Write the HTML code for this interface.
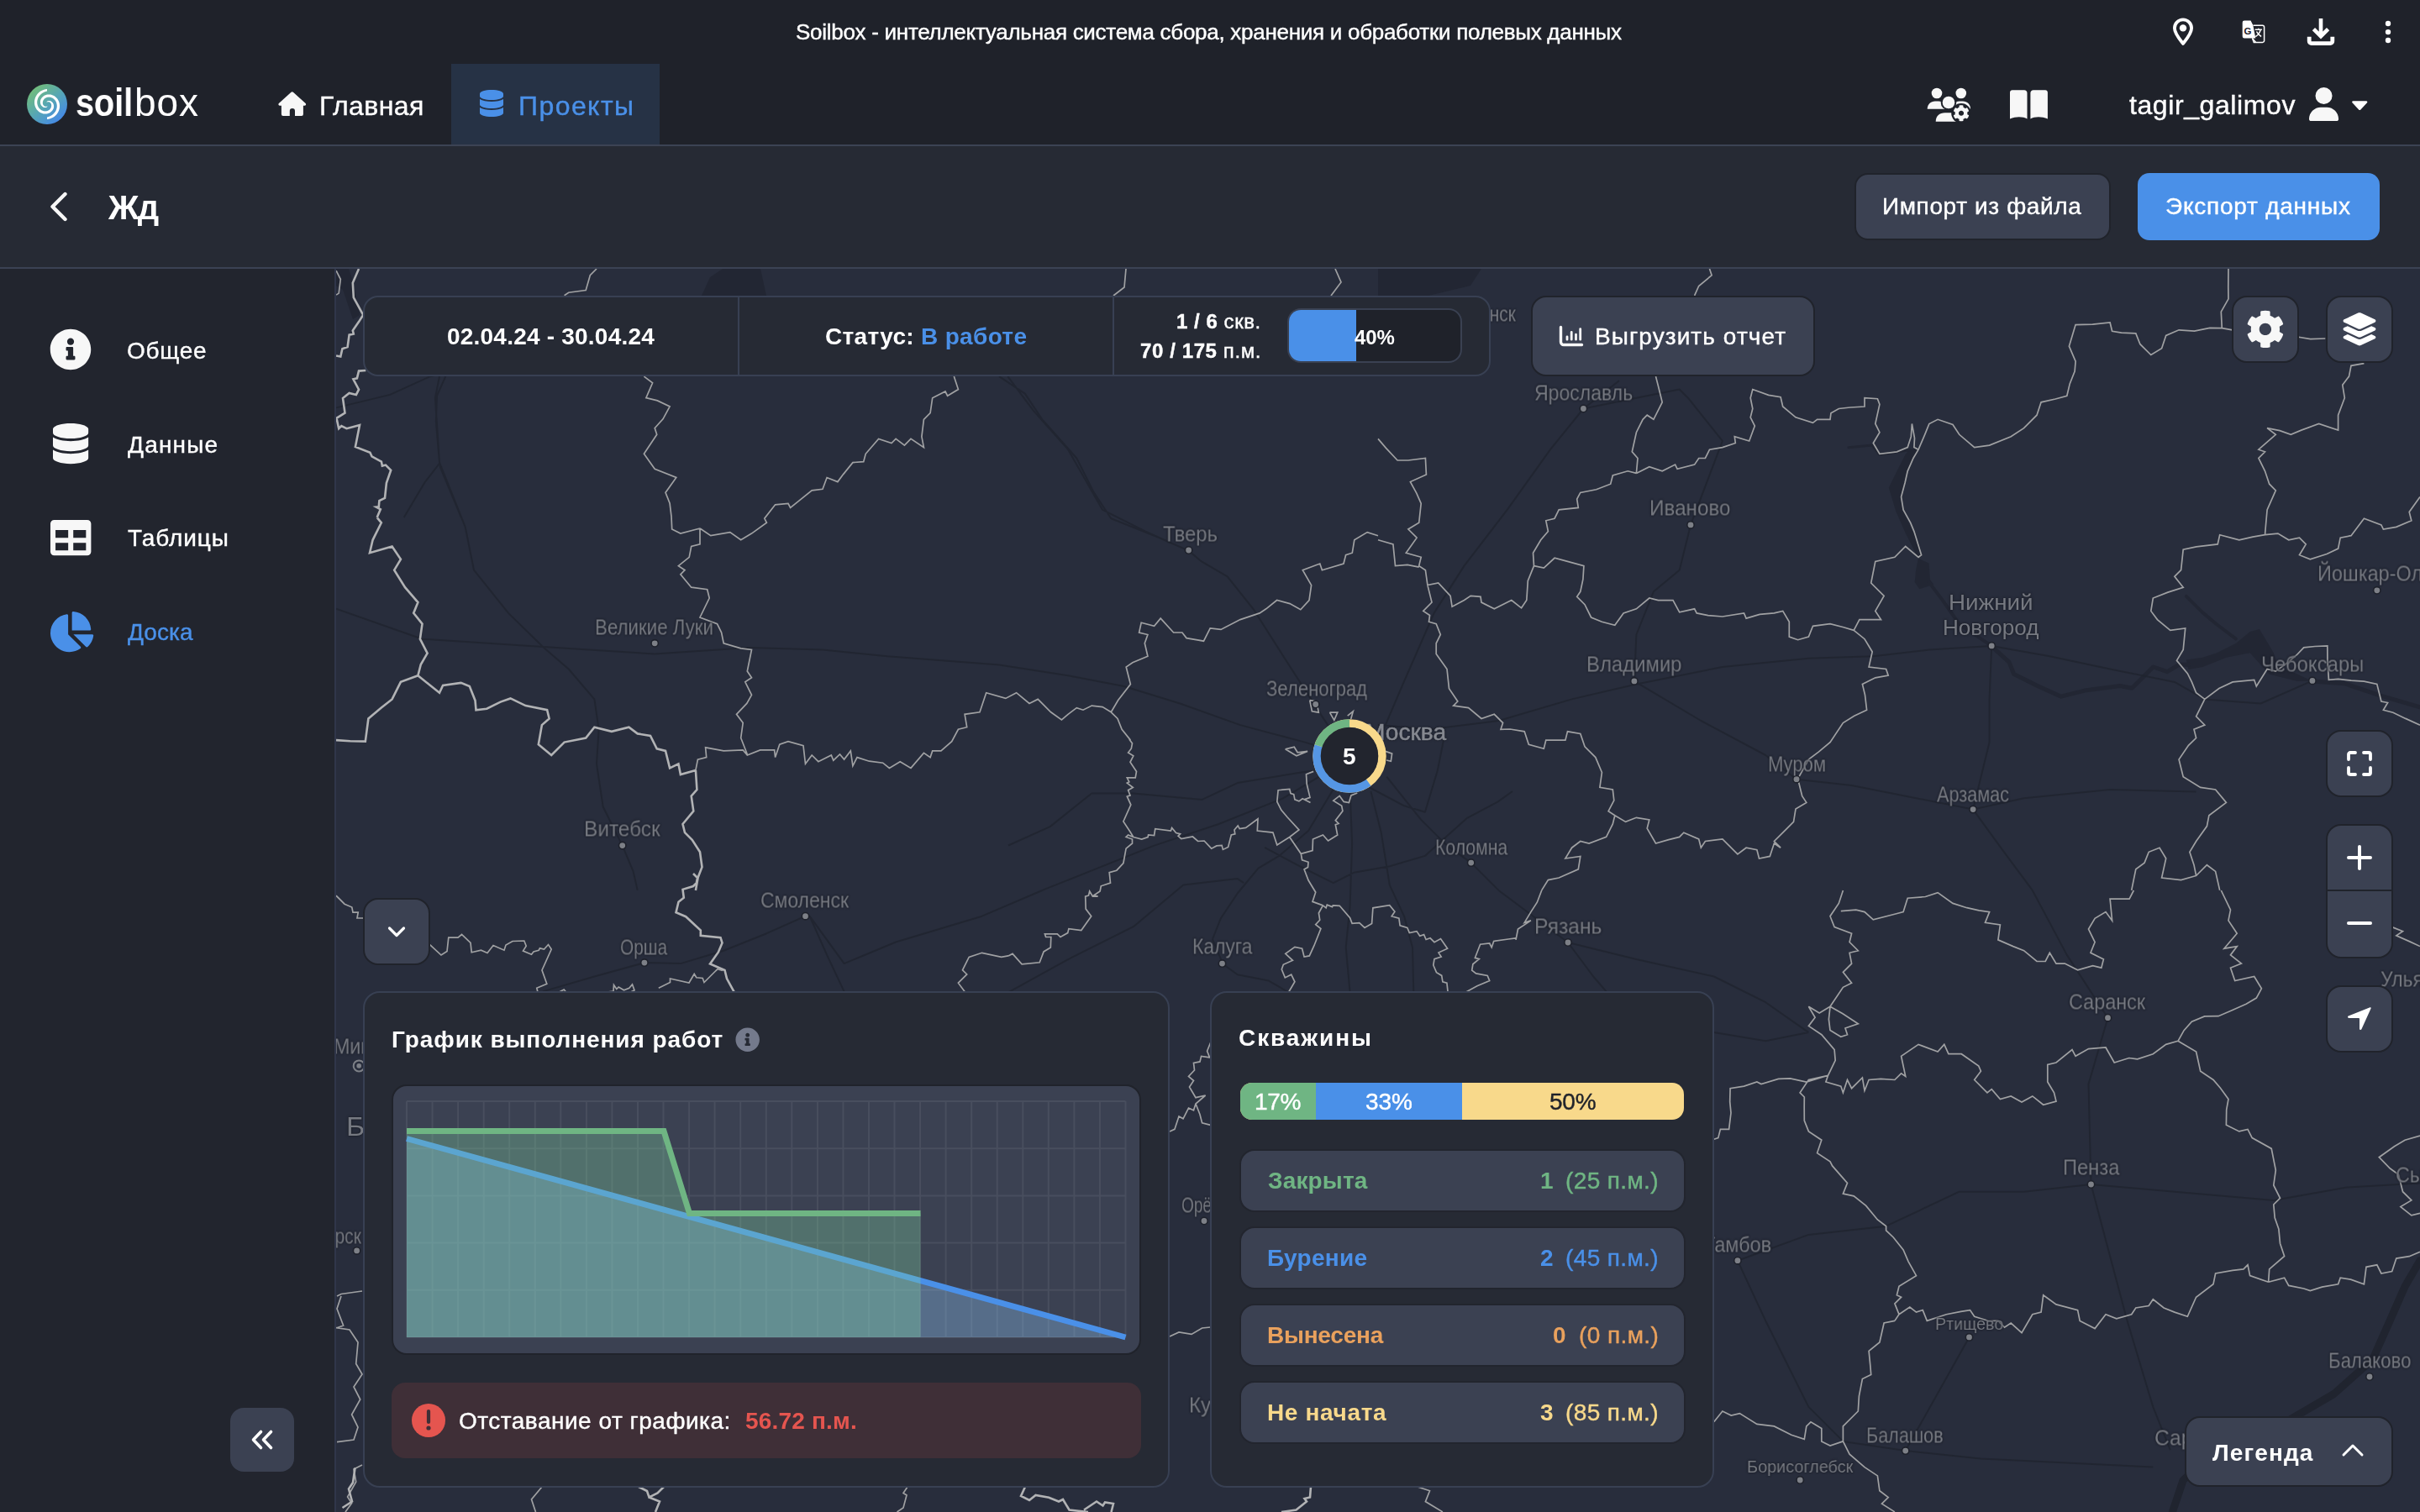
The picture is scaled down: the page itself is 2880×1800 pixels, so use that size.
<!DOCTYPE html>
<html lang="ru">
<head>
<meta charset="utf-8">
<title>Soilbox - интеллектуальная система сбора, хранения и обработки полевых данных</title>
<style>
*{box-sizing:border-box;margin:0;padding:0}
html,body{width:2880px;height:1800px;background:#1f222a}
body{overflow:hidden}
body{font-family:"Liberation Sans",sans-serif;color:#fff;position:relative}
.abs{position:absolute}
.t{position:absolute;white-space:nowrap;line-height:1;transform:translateY(-50%);will-change:transform}
.b{font-weight:700}
.t:not(.b):not(.ml){-webkit-text-stroke:.4px currentColor}
#titlebar{position:absolute;left:0;top:0;width:2880px;height:76px;background:#1f222a}
#nav{position:absolute;left:0;top:76px;width:2880px;height:97px;background:#1f222a}
#navline{position:absolute;left:0;top:172px;width:2880px;height:2px;background:#3c4354}
#tab{position:absolute;left:537px;top:76px;width:248px;height:96px;background:#263245}
#sub{position:absolute;left:0;top:174px;width:2880px;height:144px;background:#262a34}
#subline{position:absolute;left:0;top:318px;width:2880px;height:2px;background:#3b4254}
#side{position:absolute;left:0;top:320px;width:398px;height:1480px;background:#22252e}
#sideline{position:absolute;left:398px;top:320px;width:2px;height:1480px;background:#30364a}
#map{position:absolute;left:400px;top:320px;width:2480px;height:1480px;background:#282d3c;overflow:hidden}
.btn{position:absolute;background:#3b4152;border:2px solid #20232b;border-radius:16px}
.panel{position:absolute;background:#262a34;border:2px solid #384053;border-radius:18px}
svg{position:absolute;overflow:visible}
.ml{text-shadow:0 0 3px #1c1f28,0 0 2px #1c1f28}
#t_box{-webkit-text-stroke:0}
#t_title{letter-spacing:-0.278px;margin-left:-1.00px}
#t_home{letter-spacing:0.422px;margin-left:-2.00px}
#t_proj{letter-spacing:1.432px;margin-left:-2.00px}
#t_user{letter-spacing:0.591px;margin-left:0.00px}
#t_s1{letter-spacing:0.721px;margin-left:-1.00px}
#t_s2{letter-spacing:1.180px;margin-left:0.00px}
#t_s3{letter-spacing:0.914px;margin-left:0.00px}
#t_s4{letter-spacing:0.069px;margin-left:0.00px}
#t_zhd{letter-spacing:-1.356px;margin-left:1.00px}
#t_imp{letter-spacing:0.620px;margin-left:-2.00px}
#t_exp{letter-spacing:0.773px;margin-left:-1.00px}
#t_date{letter-spacing:0.219px;margin-left:-1.00px}
#t_stat{letter-spacing:0.322px;margin-left:-1.00px}
#t_skv{letter-spacing:0.541px;margin-left:-1.00px}
#t_pm{letter-spacing:0.597px;margin-left:-1.00px}
#t_40{letter-spacing:-0.104px;margin-left:0.00px}
#t_rep{letter-spacing:1.089px;margin-left:-2.00px}
#t_leg{letter-spacing:1.109px;margin-left:0.00px}
#t_graf{letter-spacing:0.917px;margin-left:-1.00px}
#t_otst{letter-spacing:0.500px;margin-left:-1.00px}
#t_5672{letter-spacing:0.194px;margin-left:0.00px}
#t_skvz{letter-spacing:1.909px;margin-left:-1.00px}
#t_17{letter-spacing:-0.325px;margin-left:-2.00px}
#t_33{letter-spacing:-0.075px;margin-left:-1.00px}
#t_50{letter-spacing:-0.200px;margin-left:-1.00px}
#t_r1{letter-spacing:0.147px;margin-left:0.00px}
#t_r2{letter-spacing:0.288px;margin-left:-1.00px}
#t_r3{letter-spacing:-0.224px;margin-left:-1.00px}
#t_r4{letter-spacing:0.636px;margin-left:-1.00px}
#t_v1{letter-spacing:0.378px;margin-left:-1.00px}
#t_v2{letter-spacing:0.378px;margin-left:-1.00px}
#t_v3{letter-spacing:0.406px;margin-left:-1.00px}
#t_v4{letter-spacing:0.378px;margin-left:-1.00px}
#t_box{letter-spacing:0.914px;margin-left:-2.00px}
#l0{transform:translateY(-50%) scaleX(0.9554);transform-origin:0 50%;margin-left:0.00px}
#l1{transform:translateY(-50%) scaleX(0.8912);transform-origin:0 50%;margin-left:-1.78px}
#l2{transform:translateY(-50%) scaleX(0.9752);transform-origin:0 50%;margin-left:-1.95px}
#l3{transform:translateY(-50%) scaleX(0.8833);transform-origin:0 50%;margin-left:0.00px}
#l4{transform:translateY(-50%) scaleX(0.9212);transform-origin:0 50%;margin-left:-0.92px}
#l5{transform:translateY(-50%) scaleX(0.8364);transform-origin:0 50%;margin-left:-1.67px}
#l6{transform:translateY(-50%) scaleX(0.9700);transform-origin:0 50%;margin-left:-1.94px}
#l7{transform:translateY(-50%) scaleX(0.9553);transform-origin:0 50%;margin-left:-1.91px}
#l8{transform:translateY(-50%) scaleX(1.1118);transform-origin:0 50%;margin-left:-2.22px}
#l9{transform:translateY(-50%) scaleX(1.0438);transform-origin:0 50%;margin-left:-2.09px}
#l10{transform:translateY(-50%) scaleX(0.8797);transform-origin:0 50%;margin-left:-1.76px}
#l11{transform:translateY(-50%) scaleX(0.8667);transform-origin:0 50%;margin-left:0.00px}
#l12{transform:translateY(-50%) scaleX(0.9387);transform-origin:0 50%;margin-left:-1.88px}
#l13{transform:translateY(-50%) scaleX(0.9552);transform-origin:0 50%;margin-left:-0.96px}
#l14{transform:translateY(-50%) scaleX(1.0420);transform-origin:0 50%;margin-left:-2.08px}
#l15{transform:translateY(-50%) scaleX(0.8476);transform-origin:0 50%;margin-left:-1.70px}
#l16{transform:translateY(-50%) scaleX(0.9178);transform-origin:0 50%;margin-left:-0.92px}
#l17{transform:translateY(-50%) scaleX(0.8327);transform-origin:0 50%;margin-left:-0.83px}
#l18{transform:translateY(-50%) scaleX(0.9156);transform-origin:0 50%;margin-left:-1.83px}
#l19{transform:translateY(-50%) scaleX(0.9281);transform-origin:0 50%;margin-left:-1.86px}
#l20{transform:translateY(-50%) scaleX(1.0635);transform-origin:0 50%;margin-left:-2.13px}
#l21{transform:translateY(-50%) scaleX(0.8428);transform-origin:0 50%;margin-left:-0.84px}
#l22{transform:translateY(-50%) scaleX(0.7611);transform-origin:0 50%;margin-left:-0.76px}
#l23{transform:translateY(-50%) scaleX(0.9654);transform-origin:0 50%;margin-left:-1.93px}
#l24{transform:translateY(-50%) scaleX(0.9851);transform-origin:0 50%;margin-left:-1.97px}
#l25{transform:translateY(-50%) scaleX(0.9367);transform-origin:0 50%;margin-left:-0.94px}
#l26{transform:translateY(-50%) scaleX(0.9214);transform-origin:0 50%;margin-left:0.00px}
#l27{transform:translateY(-50%) scaleX(0.9473);transform-origin:0 50%;margin-left:-1.89px}
#l28{transform:translateY(-50%) scaleX(0.9375);transform-origin:0 50%;margin-left:0.00px}
#l29{transform:translateY(-50%) scaleX(0.9823);transform-origin:0 50%;margin-left:-0.98px}
#l30{transform:translateY(-50%) scaleX(0.8877);transform-origin:0 50%;margin-left:-1.78px}
#l31{transform:translateY(-50%) scaleX(0.8644);transform-origin:0 50%;margin-left:-1.73px}
#l32{transform:translateY(-50%) scaleX(0.9925);transform-origin:0 50%;margin-left:-0.99px}
#l33{transform:translateY(-50%) scaleX(0.9847);transform-origin:0 50%;margin-left:-0.98px}
#l34{transform:translateY(-50%) scaleX(0.9311);transform-origin:0 50%;margin-left:-0.93px}
</style>
</head>
<body>
<div id="titlebar"></div>
<div id="nav"></div>
<div id="tab"></div>
<div id="navline"></div>
<div id="sub"></div>
<div id="subline"></div>
<div id="side"></div>
<div id="map">
<svg style="left:0;top:0" width="2480" height="1480" viewBox="0 0 2480 1480">
<g fill="#222633"><path d="M435.0 32.0L445.0 10.0L460.0 0.0L505.0 0.0L512.0 32.0z"/><path d="M0.0 0.0L15.0 0.0L20.0 15.0L28.0 55.0L20.0 60.0L8.0 25.0L0.0 20.0z"/><path d="M1240.0 0.0L1363.0 0.0L1350.0 20.0L1300.0 32.0L1240.0 32.0z"/><path d="M1884.3 212.7L1870.2 240.8L1863.2 274.5L1867.4 294.2L1884.3 327.9L1887.1 342.0L1882.9 344.8L1880.1 339.2L1867.4 313.9L1856.2 288.6L1847.8 260.5L1856.2 243.6L1867.4 221.2L1871.7 215.5z"/><path d="M1882.9 344.8L1895.5 350.4L1896.9 370.1L1901.2 375.7L1884.3 381.3L1878.7 372.9L1880.1 358.8z"/><path d="M2201.8 465.6L2221.5 462.8L2238.3 457.2L2260.8 446.0L2277.7 431.9L2288.9 429.1L2297.4 443.1L2305.8 457.2L2311.4 474.0L2333.9 482.5L2351.9 490.9L2333.9 490.9L2300.2 482.5L2277.7 457.2L2249.6 462.8L2221.5 474.0L2204.6 476.9z"/></g>
<path d="M1895.5 372.9L1912.4 395.4L1932.1 423.5L1957.4 440.3L1969.7 448.8" fill="none" stroke="#222633" stroke-width="4" stroke-linejoin="round" stroke-linecap="round"/>
<path d="M1969.7 448.8L1991.1 468.4L1996.7 482.5L2024.8 496.5L2052.9 509.2L2081.0 502.1L2123.1 496.5L2137.2 499.3L2154.0 482.5L2162.5 474.0L2179.3 479.7L2193.4 471.2L2204.6 471.2" fill="none" stroke="#222633" stroke-width="5" stroke-linejoin="round" stroke-linecap="round"/>
<path d="M2201.8 389.8L2221.5 409.4L2238.3 423.5L2260.8 440.3" fill="none" stroke="#222633" stroke-width="4" stroke-linejoin="round" stroke-linecap="round"/>
<path d="M1800.0 212.7L1828.1 209.9L1836.5 221.2L1856.2 218.3L1873.1 215.5" fill="none" stroke="#222633" stroke-width="3" stroke-linejoin="round" stroke-linecap="round"/>
<path d="M2351.9 490.9L2390.1 493.7L2432.2 507.8L2480.0 521.8" fill="none" stroke="#222633" stroke-width="5" stroke-linejoin="round" stroke-linecap="round"/>
<path d="M1204.1 579.0L1173.4 532.9L1127.3 461.2L1091.4 404.8L1060.7 366.4L1029.9 348.4L1014.5 335.6L973.6 317.7L922.3 297.2L901.8 266.4L881.3 225.5L840.3 179.3L819.8 148.6L789.1 128.1M799.3 128.1L830.1 169.1L871.1 215.2L912.1 286.9L963.3 312.6L1014.5 335.6M1204.1 579.0L1152.9 563.6L1076.0 543.1L1004.3 517.5L937.7 497.0L871.1 484.2L789.1 471.4L655.9 461.2L579.0 453.5L491.9 450.9L379.2 458.6L246.0 449.9L102.5 440.7L0.0 404.8M123.0 128.1L117.9 153.7L123.0 230.6L153.7 307.4L164.0 358.7L205.0 409.9L246.0 449.9L276.7 476.5L307.4 512.4L312.6 548.3L310.0 589.3L317.7 640.5L340.7 686.6L353.6 717.4L358.7 739.9M0.1 165.4L64.2 149.9L111.7 128.2L120.0 126.2M130.3 128.2L120.0 151.0L118.9 182.0L123.1 231.5L124.1 236.7L148.9 296.0M123.1 231.5L105.5 254.3L80.7 296.0M1204.1 584.1L1127.3 630.2L1050.4 661.0L973.6 686.6L896.7 717.4L840.3 739.9M840.3 740.0L768.6 770.7L666.1 801.5L604.6 827.1L563.6 770.7L558.5 770.7M558.5 770.7L512.4 791.2L461.2 811.7L409.9 827.1L366.9 826.1L307.4 842.5L246.0 860.4M563.6 770.7L584.1 816.9L604.6 860.4M1206.6 622.0L1209.1 684.0L1206.6 758.4L1201.7 808.0L1206.6 861.3M1231.4 622.0L1243.8 671.6L1253.8 733.6L1271.1 770.8L1281.0 808.0L1282.3 861.3M1186.8 619.5L1157.1 669.1L1122.3 698.9L1097.5 713.7L1072.7 743.5L1052.9 773.2L1043.0 798.0L1055.4 827.8M800.0 686.5L849.6 664.1L899.2 624.5L948.8 624.5L1030.6 631.9L1072.7 612.1L1147.1 599.7L1164.5 597.2M1105.0 688.9L1147.1 711.3L1186.8 731.1L1211.6 718.7L1253.8 711.3L1295.9 698.9L1320.7 676.5L1345.5 654.2L1382.7 634.4L1400.0 622.0M1229.0 617.0L1271.1 639.3L1295.9 646.8L1310.8 597.2L1318.2 560.0M800.0 861.3L874.4 820.4L948.8 783.2L1008.3 733.6L1072.7 726.1L1080.2 731.1M1055.4 827.8L1072.7 840.2L1109.9 847.6L1133.5 861.3M1240.0 543.1L1301.5 548.3L1383.5 538.0L1470.6 512.4L1547.4 494.5L1649.9 474.0L1752.4 463.7L1829.3 461.2L1895.9 453.5L1970.2 448.9M1970.2 448.9L2039.3 461.2L2111.1 476.5L2187.9 491.9L2223.8 512.4L2290.4 517.5L2351.9 490.4M1240.0 563.6L1270.7 491.9L1306.6 409.9L1342.5 353.6L1393.7 286.9L1445.0 215.2L1484.4 166.5L1526.9 133.2M1484.4 166.5L1547.4 153.7L1598.7 143.5L1608.9 153.7L1629.4 179.3L1649.9 205.0L1612.0 304.9M1612.0 304.9L1598.7 358.7L1567.9 384.3L1547.4 435.5L1544.9 490.9M1250.2 604.6L1291.2 655.9L1322.0 686.6L1350.7 707.1L1383.5 739.9M1383.5 740.0L1424.5 770.7L1466.0 802.0L1496.2 842.5L1511.6 860.4M1466.0 802.0L1547.4 822.0L1639.7 842.5L1701.2 873.2L1752.4 909.1M1544.9 490.9L1624.3 538.0L1701.2 579.0L1738.0 607.7L1803.6 614.9L1880.5 630.2L1948.1 643.6L2008.6 630.2L2111.1 620.0L2213.6 622.6M1970.2 448.9L1967.6 512.4L1967.6 563.6L1948.1 643.6L1983.0 691.7L2018.8 739.9M2018.8 740.0L2059.8 816.9L2108.5 891.7L2085.5 970.6L2088.5 1090.0L2111.1 1175.5L2131.6 1252.4L2162.3 1354.9L2182.8 1406.1M1667.9 1180.7L1752.4 1149.9L1844.6 1139.7L1931.7 1098.7L2008.6 1098.7L2088.5 1090.0L2187.9 1098.7L2305.8 1108.9L2392.9 1093.6L2480.0 1088.4M1667.9 1180.7L1701.2 1252.4L1752.4 1354.9L1793.4 1395.9L1867.7 1407.1L1957.4 1416.4L2059.8 1421.5L2162.3 1426.6M1639.7 909.1L1701.2 919.3L1752.4 909.1M1943.5 1271.9L1867.7 1407.1" fill="none" stroke="#20242f" stroke-width="2" stroke-linejoin="round" stroke-opacity=".85"/>
<path d="M2480.0 1180.7L2462.1 1211.4L2444.1 1252.4L2423.6 1298.5L2377.5 1339.5L2316.0 1375.4L2244.3 1401.0L2198.2 1442.0L2185.4 1479.9" fill="none" stroke="#20242f" stroke-width="9" stroke-linejoin="round" stroke-linecap="round"/>
<path d="M310.0 0.0L302.3 7.7L297.2 25.6L276.7 28.2L271.6 31.8M366.4 128.1L376.6 135.8L368.9 153.7L382.3 156.9L397.1 164.0L389.0 178.8L379.2 189.6L381.7 197.3L366.4 220.3L379.2 238.3L404.8 248.5L392.0 266.4L397.1 279.3L399.0 294.9L399.7 310.0L409.9 315.1L433.0 309.0M433.0 309.0L445.8 317.7L468.8 313.6L481.7 322.8L494.5 315.1L512.4 302.3L509.8 297.2L522.6 280.8L538.0 279.3L540.6 284.4L550.6 276.4L566.2 263.9L579.0 262.3L584.1 248.5L596.9 253.6L603.6 244.6L614.9 230.6L627.7 229.6L630.2 220.3L645.6 202.4L661.0 207.5L666.1 202.4L676.4 210.1L684.0 202.4L699.4 212.6L696.9 199.8L699.4 179.3L707.1 171.7L709.7 153.7L725.0 146.0L727.6 151.2L740.4 143.5L735.3 128.1M433.0 309.0L433.0 327.9L422.7 330.5L420.2 343.3L407.4 353.6L415.0 358.7L409.9 363.8L422.7 379.2L441.7 381.7L444.2 392.0L433.0 415.0L453.5 422.7L458.6 433.0L461.2 445.8L481.7 451.9L494.5 453.5L489.3 479.1L494.5 486.8L486.8 491.9L494.5 507.3L488.8 517.4L476.5 530.3L484.2 540.6L481.7 558.5L489.3 578.0M427.9 596.9L430.4 584.1L440.7 581.6L439.6 569.8L461.2 573.9L484.2 572.9L489.3 579.0L504.7 572.9L521.6 572.9L522.6 581.6L527.8 566.2L538.0 562.6L556.0 567.7L558.5 589.3L566.2 579.0L573.9 586.7L589.3 579.0L591.8 585.2L599.5 578.0L604.6 584.1L612.3 573.9L614.9 591.8L620.0 581.6L634.5 586.2L650.7 588.2L658.4 594.4L671.2 586.7L684.0 594.4L699.4 576.4L707.1 581.6L709.7 573.9L719.9 573.9L732.7 562.6L740.4 548.3L750.7 545.7L748.1 530.3L766.0 527.8L773.7 504.7L796.8 511.4L809.6 504.7L825.0 517.5L835.2 512.4L850.6 527.8L863.4 537.0L871.1 530.3L881.3 522.6L889.0 525.2L899.3 520.1L912.1 521.6L922.3 527.8M922.3 527.8L930.7 513.6L945.4 494.5L940.2 474.0L947.9 468.8L965.9 461.2L962.3 445.8L965.9 435.5L955.6 433.0L958.2 421.2L973.6 425.3L981.2 416.1L996.6 433.0L1006.9 433.0L1012.0 439.6L1032.5 443.2L1040.2 427.9L1053.0 429.4L1076.0 417.6L1099.1 409.9L1106.8 404.8L1119.6 394.5L1135.0 398.6L1147.8 405.8L1158.0 394.5L1160.6 376.6L1150.3 358.7L1170.8 351.0L1173.4 358.7L1199.0 351.0L1201.6 340.7L1209.3 338.2L1211.8 322.8L1227.2 313.6L1240.0 317.7M922.3 527.8L930.0 535.5L935.1 548.3L945.4 561.1M1240.0 202.4L1249.4 213.4L1263.1 228.0L1275.9 228.0L1296.4 225.5L1297.4 244.9L1278.4 253.6L1285.8 267.1L1291.2 279.3L1288.7 302.3L1275.9 310.0L1286.1 320.2L1273.3 338.2L1291.2 343.3L1288.7 353.6L1296.4 358.7L1298.9 376.6L1311.7 374.0L1326.1 389.4L1328.1 402.2L1342.5 394.5L1350.2 389.4L1362.0 390.4L1363.0 397.1L1378.3 404.8L1398.8 394.5L1410.6 403.8L1416.8 394.5L1418.3 371.5L1425.5 353.6M1240.0 322.8L1257.9 327.9L1260.5 353.6L1275.0 352.4L1288.7 355.1M1298.9 376.6L1304.0 397.1L1293.8 407.4L1301.5 412.5L1300.5 420.2L1309.2 422.7L1314.3 435.5L1309.2 445.8L1309.2 458.6L1322.0 476.5L1324.5 499.6L1334.8 515.0L1329.7 520.1L1347.6 522.6L1363.0 535.5L1378.3 530.3L1388.6 540.6L1386.0 548.3L1397.1 548.0L1414.2 550.8L1419.3 566.2L1437.3 571.3L1439.8 561.1L1462.9 561.1L1465.5 550.8L1480.8 553.4L1486.0 568.8L1498.8 581.6L1506.4 599.5L1503.9 617.4L1519.3 620.0L1520.8 632.8L1514.1 645.6L1521.8 650.7M1521.8 650.7L1519.3 661.0L1511.6 676.4L1491.1 684.0L1480.8 681.5L1470.6 689.2L1462.9 702.0L1480.8 699.4L1478.3 714.8L1455.2 725.0L1442.4 727.6L1434.7 739.9M1521.8 650.7L1534.6 658.4L1547.4 653.3L1562.8 655.9L1560.2 666.1L1570.5 684.0L1585.8 679.6L1598.7 676.4L1603.8 671.2L1621.7 678.9L1624.3 689.2L1629.4 681.5L1649.9 678.9L1667.9 696.9L1678.1 689.2L1690.9 691.7L1693.5 702.0L1706.3 699.4L1711.4 684.0L1719.1 689.2L1711.4 681.5L1726.8 666.1L1734.5 658.4L1737.0 643.1L1749.8 635.4L1744.7 627.7L1739.6 607.2M1739.6 607.2L1752.4 584.1L1764.3 575.1L1778.0 563.6L1793.4 540.6L1806.7 532.3L1821.6 525.2L1819.5 507.4L1816.4 494.5L1831.8 486.8L1847.2 484.2L1844.6 476.5L1824.1 474.0L1828.2 456.0L1819.0 440.7L1806.2 430.4M1806.2 430.4L1794.0 426.7L1778.0 422.7L1757.5 425.3L1752.4 438.1L1739.6 441.7L1729.3 438.1L1729.3 420.2L1721.7 407.4L1711.4 409.9L1694.2 411.4L1678.1 416.1L1675.5 409.9L1649.9 414.0L1632.7 412.7L1619.2 409.9L1616.6 404.8L1598.7 408.9L1591.0 394.5L1573.4 394.6L1562.8 392.0L1547.4 404.8L1532.1 409.9L1521.8 424.3L1506.4 420.2L1493.6 415.0L1486.0 399.7L1476.7 390.4L1480.8 384.3L1483.9 369.7L1484.9 353.6L1465.5 348.4L1450.1 344.3L1437.3 356.1L1425.5 353.6M1806.2 430.4L1812.9 417.6L1838.5 417.6L1831.8 407.4L1842.1 389.4L1826.7 374.0L1831.8 348.4L1854.9 343.3L1867.7 330.5L1883.1 343.3L1886.6 340.7L1883.0 329.1L1877.9 312.6L1873.7 302.4L1865.1 286.9L1862.6 271.6L1867.2 254.2L1870.2 240.8L1877.1 225.2L1883.1 215.2L1890.7 197.3L1895.9 184.5L1906.1 179.3L1924.0 185.5L1931.7 197.3L1949.7 212.6L1967.6 210.1L1993.2 199.8L2008.6 189.6L2024.0 174.2L2029.1 158.8L2046.1 155.0L2059.8 151.2L2063.2 136.9L2069.1 122.0L2070.1 110.2L2062.4 92.2L2070.1 66.6L2090.4 66.1L2111.1 64.0L2113.6 74.3L2124.6 76.2L2141.8 76.9L2146.9 89.7L2159.8 102.5L2172.6 94.8L2177.7 79.4L2193.1 72.8L2211.5 74.2L2229.9 70.3L2244.3 70.7L2258.3 73.1L2270.6 73.6L2286.8 73.9L2300.6 78.3L2316.4 77.8L2334.0 81.0L2349.6 83.6L2367.3 83.0M2244.3 70.7L2243.3 51.2L2252.0 35.9L2251.8 21.7L2252.0 0.0M1425.5 353.6L1424.5 338.2L1433.7 322.8L1442.4 312.6L1439.8 299.8L1450.1 297.2L1455.2 286.9L1478.3 284.4L1476.7 274.1L1480.8 266.4L1499.7 262.8L1516.7 256.2L1519.3 246.0L1537.2 240.8L1547.4 243.4M1547.4 243.4L1549.0 225.5L1542.3 217.8L1547.4 194.7L1555.1 179.3L1560.2 174.2L1567.9 179.3L1578.2 158.8L1573.1 138.3L1570.5 128.1M1547.4 243.4L1562.8 235.7L1578.2 240.8L1593.6 233.1L1596.1 238.3L1616.6 233.1L1621.7 225.5L1629.4 225.5L1634.5 215.2L1649.9 212.6L1665.3 207.5L1664.3 199.8L1681.7 205.0L1688.3 187.0L1683.2 176.8L1685.8 166.5L1683.2 153.7L1685.8 143.5L1704.7 150.4L1719.1 152.7L1721.7 164.0L1737.0 176.8L1757.5 183.4L1762.6 179.3L1778.0 179.3L1779.0 171.7L1788.3 166.5L1801.9 165.0L1819.0 164.0L1819.0 153.7L1834.4 154.7L1836.9 161.4L1831.8 184.5L1836.9 194.7L1829.3 207.5L1836.9 220.3L1857.4 217.8L1870.2 212.6L1874.3 199.9L1875.4 184.5L1878.5 201.6L1877.9 212.6L1883.1 215.2M2480.0 271.6L2467.2 289.5L2469.8 299.8L2451.8 307.4L2436.4 310.0L2433.9 304.9L2413.4 297.2L2398.0 317.7L2385.2 320.2L2382.6 333.1L2369.1 339.5L2349.3 345.9L2336.5 340.7L2344.2 327.9L2336.5 320.2L2323.7 322.8L2310.9 315.1L2295.5 316.7M2295.5 316.7L2296.6 303.8L2298.1 286.9L2308.3 263.9L2300.7 256.2L2295.5 240.8L2287.9 225.5L2295.5 217.8L2287.9 215.2L2308.3 197.3L2298.1 189.6L2313.1 192.6L2326.3 197.3L2338.7 192.1L2359.6 184.5L2382.6 192.1L2382.6 174.2L2390.3 153.7L2387.8 138.3L2395.5 128.1L2398.0 115.3L2413.4 112.7M2295.5 316.7L2281.1 319.2L2264.8 322.8L2241.7 316.7L2239.2 327.9L2213.9 330.9L2198.2 334.1L2195.6 358.7L2187.9 366.4L2198.2 379.2L2179.9 385.1L2162.3 392.0L2159.8 407.4L2167.4 417.6L2182.8 430.4L2200.7 427.9L2198.2 453.5L2190.5 466.3L2203.3 481.7L2208.4 491.9L2213.6 504.7L2223.8 512.4M2223.8 512.4L2240.9 499.6L2257.1 491.9L2282.7 489.3L2285.3 497.0L2298.1 476.5L2308.3 479.1L2322.5 468.8L2333.5 459.5L2341.7 450.9L2355.0 449.5L2369.8 448.9L2369.9 465.1L2371.4 489.3L2382.7 488.4L2398.1 490.2L2413.4 491.1L2428.8 494.5L2433.9 515.0L2441.6 516.5L2436.4 525.2L2447.9 528.3L2462.8 535.4L2480.0 543.1M2223.8 512.4L2213.6 532.9L2223.8 543.1L2211.0 548.3L2213.6 558.5L2204.5 567.3L2193.1 584.1L2198.2 604.6L2218.7 617.4L2236.6 620.0L2249.4 635.4L2228.9 650.7L2226.4 663.6L2213.6 681.5L2205.9 694.3L2211.0 709.7L2213.6 722.5L2195.6 727.6L2172.6 725.0L2177.7 702.0L2170.0 689.2L2157.2 694.3L2152.1 707.1L2141.8 714.8L2136.7 739.9M2213.6 722.5L2226.4 709.7L2236.6 717.4L2241.7 739.9M1634.5 0.0L1637.1 7.7L1621.7 20.5L1616.6 31.8M799.9 817.9L791.7 819.4L768.6 814.3L753.2 819.4L745.5 834.8L750.7 839.9L740.4 850.2L748.1 860.4M1434.7 740.0L1429.3 754.2L1421.9 765.6L1414.2 778.4L1421.9 775.9L1406.5 786.1L1404.0 798.9M1793.4 740.0L1788.3 755.4L1778.0 770.7L1783.1 783.6L1803.6 791.2L1801.1 801.5L1811.3 811.7L1801.1 814.3L1803.6 827.1L1793.4 837.4L1803.6 850.2L1793.4 855.3L1778.0 878.3M1778.0 878.3L1765.2 886.0L1752.4 878.3L1760.1 891.2L1752.4 901.4L1767.8 911.7L1783.1 929.6L1784.2 942.4L1775.5 960.3M1778.0 878.3L1793.0 886.8L1811.3 898.8L1796.0 904.0L1798.5 911.7L1790.8 914.2L1778.0 906.5L1776.4 893.4L1778.0 878.3M1775.5 960.3L1749.8 968.0L1730.5 963.8L1716.5 964.4L1696.0 970.6L1690.9 968.0L1675.5 973.1L1659.1 975.7L1658.7 991.7L1660.0 1004.8L1657.6 1024.4L1647.4 1024.4L1644.8 1034.6L1639.7 1036.2M1775.5 960.3L1772.9 968.0L1790.8 973.1L1793.4 980.8L1798.5 965.5L1803.6 975.7L1816.4 962.9L1819.0 978.3L1824.1 965.5L1838.3 964.4L1854.9 965.5L1862.6 957.8L1867.7 961.4L1862.6 937.3L1883.1 923.4L1906.1 932.1L1913.8 923.4L1918.9 934.7L1934.3 934.7L1954.8 949.1L1957.4 955.2L1949.7 965.5L1965.0 980.8L1970.2 976.7L1980.4 988.5L1993.2 984.9L2006.0 992.1L2018.8 984.9L2031.7 995.2L2047.0 991.1L2044.5 980.8L2036.8 968.0L2036.8 947.5L2047.0 945.0L2066.0 929.6L2070.1 937.3L2085.5 928.6L2106.0 927.0L2116.2 945.0L2133.8 939.5L2143.7 940.9L2162.3 934.7L2177.7 923.4L2192.0 919.3M2192.0 919.3L2199.1 906.7L2208.4 896.3L2223.6 889.9L2240.0 889.7L2254.5 883.5L2273.1 875.2L2285.3 868.1L2291.4 856.8L2282.7 842.5L2259.7 847.6L2254.5 832.2L2267.4 827.1L2254.5 816.9L2262.2 806.6L2246.9 809.2L2262.2 791.2L2252.0 775.9L2254.5 763.1L2243.3 740.0M2192.0 919.3L2213.6 932.1L2218.7 955.2L2234.0 965.5L2242.4 975.2L2252.0 988.5L2249.7 1001.2L2249.4 1019.3L2264.8 1026.9L2275.0 1024.4L2280.2 1034.6L2303.2 1047.4L2308.3 1073.1L2305.8 1091.0L2313.5 1106.4L2305.8 1114.0L2307.2 1129.9L2311.9 1143.3L2313.5 1160.2L2318.6 1175.5L2300.7 1190.9L2299.6 1206.3M1790.8 764.6L1808.8 763.1L1819.0 765.6L1829.3 774.8L1854.9 768.2L1865.1 765.6L1870.2 749.2L1891.4 747.5L1906.1 742.6L1924.0 755.4L1940.8 760.7L1955.2 763.8L1967.6 765.6L1962.5 778.4L1980.4 781.0L1977.9 798.9L1995.8 806.6L2008.6 811.7L2024.0 824.5L2034.2 824.5L2039.3 814.3L2047.0 827.1L2057.3 827.1L2072.6 834.8L2090.6 829.7L2100.8 832.2L2103.4 822.0L2088.0 814.3L2093.1 801.5L2085.5 786.1L2093.1 773.3L2106.0 765.6L2113.6 775.9L2111.1 750.2L2134.1 750.2L2139.3 740.0M1775.5 960.3L1752.4 965.5L1742.1 980.8L1747.3 986.0L1747.2 998.1L1747.3 1014.1L1752.4 1026.9L1767.8 1037.2L1762.6 1052.6L1778.0 1062.8L1780.6 1067.9L1798.5 1088.4L1793.4 1101.2L1806.2 1103.8L1820.7 1115.4L1834.4 1132.0L1844.6 1139.7L1844.6 1144.8L1853.2 1153.0L1865.1 1167.9L1871.1 1181.8L1880.5 1198.6L1860.0 1211.4L1857.4 1221.7L1862.6 1224.2L1854.9 1231.9L1860.0 1244.7L1854.9 1252.4M1860.0 1244.7L1872.8 1236.0L1880.5 1242.1L1888.2 1239.6L1893.3 1252.4L1916.4 1244.7L1933.6 1241.3L1944.5 1239.6L1949.7 1247.3L1966.5 1252.5L1977.9 1252.4L1985.5 1260.1L1993.2 1255.0L2006.0 1266.7L2018.8 1244.7L2029.1 1242.1L2031.7 1221.7L2047.0 1232.9L2072.6 1239.6L2075.2 1252.4L2093.1 1261.6L2106.0 1244.7L2118.8 1249.8L2136.7 1244.7L2141.8 1237.0L2157.2 1234.5L2162.3 1226.8L2175.1 1237.0L2187.9 1242.1L2203.3 1247.3L2213.6 1224.2L2234.0 1208.8L2236.6 1196.0L2257.0 1192.3L2269.9 1190.9L2275.0 1185.8L2277.6 1198.6L2299.6 1206.3M2299.6 1206.3L2318.6 1201.2L2323.7 1210.4L2341.7 1214.0L2349.3 1216.5L2363.4 1212.1L2382.6 1208.8L2385.2 1201.2L2397.5 1203.2L2413.4 1208.8L2416.0 1188.3L2428.8 1185.8L2433.9 1196.0L2446.7 1193.5L2451.8 1178.1L2467.2 1175.7L2480.0 1170.4M1854.9 1252.4L1842.1 1255.0L1836.9 1278.0L1824.1 1288.3L1825.7 1304.7L1826.7 1316.4L1816.4 1321.6L1812.4 1342.1L1811.3 1360.0L1793.4 1377.9L1793.4 1395.9M1793.4 1395.9L1778.0 1401.0L1767.8 1395.9L1767.8 1380.5L1755.0 1372.8L1749.8 1377.9L1747.3 1393.3L1731.9 1388.2L1711.4 1377.9L1690.9 1375.4L1670.4 1362.6L1660.2 1365.1L1649.9 1360.0L1639.7 1372.8M1793.4 1395.9L1801.1 1411.2L1819.0 1426.6L1834.4 1436.9L1836.9 1454.8L1847.2 1462.5L1839.5 1470.2L1854.9 1479.9M2480.0 1032.1L2462.1 1037.2L2449.5 1044.7L2431.3 1057.7L2444.4 1071.0L2454.4 1078.2L2459.5 1098.7L2469.8 1108.9L2456.9 1116.6L2469.8 1126.9L2480.0 1124.3M2446.7 783.6L2459.5 788.7L2451.8 793.8L2467.7 800.9L2480.0 806.6M1286.1 1449.7L1301.5 1454.8L1296.4 1467.6L1316.9 1479.9M943.8 560.0L947.5 565.0L946.3 571.2L942.6 576.1L948.8 579.8L945.0 587.3L952.5 598.4L951.2 605.9L941.3 605.9L943.8 610.8L941.3 612.1L948.3 617.5L942.6 620.7L945.0 626.9L941.3 628.2L945.8 638.1L936.9 657.9L945.0 670.3L948.8 676.5M948.8 676.5L958.7 679.0L966.1 676.5L966.6 674.0L973.6 674.5L974.8 666.6L993.4 669.1L994.6 665.4L999.6 671.6L1004.5 672.8L1002.1 675.3L1005.8 678.5L1019.4 676.0L1025.6 681.5L1033.1 681.0L1041.7 690.2L1047.9 686.9L1054.1 686.4L1055.4 691.4L1061.6 688.4L1065.3 674.0L1069.8 672.8L1069.0 667.9L1073.2 662.9L1075.2 666.6L1082.6 665.4L1097.0 654.7L1096.3 669.1L1114.9 671.1L1119.8 686.0L1134.7 676.5M948.8 676.5L942.6 674.0L940.1 676.5L947.5 679.0L947.5 684.0L940.1 690.2L936.9 707.5L928.9 716.2L920.2 718.7L921.5 731.1L910.3 734.8L909.1 741.0L901.7 746.0L906.6 747.2L900.4 747.2L896.7 741.0L895.5 746.0L891.7 747.2L892.2 762.1L898.7 770.7L886.8 787.6L871.9 785.6L870.7 790.6L862.0 795.5L858.3 791.8L843.4 791.8L844.6 795.5L850.8 795.5L850.3 807.9L842.1 812.9L837.2 825.8L816.1 827.8L805.0 815.4L800.0 817.9M1134.7 676.5L1145.9 667.9L1132.2 653.0L1124.8 644.3L1119.8 634.4L1121.1 620.7L1134.7 619.5L1136.0 624.5L1139.7 625.7L1140.9 631.9L1145.9 633.9L1150.1 630.7L1159.5 635.6M1163.2 598.4L1154.5 601.7L1155.2 613.5L1159.0 629.4L1152.1 631.9M1134.7 676.5L1148.3 696.4L1149.6 703.8L1157.0 706.3L1156.5 712.5L1152.1 715.0L1157.1 728.0L1165.7 742.2L1162.0 753.4L1174.4 757.9M1148.3 696.4L1162.0 692.6L1162.5 679.0L1174.4 674.0L1180.6 681.0L1191.7 674.0L1189.3 661.7L1193.0 660.4L1189.3 656.7L1197.9 645.5L1196.7 639.3L1186.8 633.1L1194.2 627.4L1199.2 634.4L1205.4 635.6L1207.9 626.9L1215.3 624.0M1174.4 757.9L1178.1 760.8L1179.3 757.1L1185.5 759.6L1186.3 757.9L1194.2 758.3L1206.6 772.7L1209.1 779.4L1217.8 778.7L1224.0 784.4L1232.6 779.4L1233.9 760.8L1253.7 757.6L1259.9 765.3L1256.2 770.7L1264.9 773.2L1266.1 781.9L1274.8 784.4L1277.3 790.6L1286.0 788.6L1289.7 794.3L1294.6 792.6L1297.1 798.5L1302.1 796.8L1307.0 801.7L1314.5 797.5L1322.6 809.2L1312.0 814.1L1315.2 819.1L1307.0 821.6L1305.8 829.0L1309.5 837.7L1315.7 841.4L1316.9 848.8L1321.9 850.1L1323.1 861.2M1174.4 757.9L1169.4 767.0L1170.7 775.2L1165.7 780.7L1171.9 785.6L1163.9 805.7L1158.3 817.9L1152.1 819.1L1149.6 809.2L1140.9 807.4L1129.8 815.4L1138.4 823.3L1127.3 828.3L1125.3 834.0L1129.3 843.9L1136.7 840.2L1140.9 848.8L1133.5 861.2M1403.7 796.8L1395.0 798.0L1377.7 800.5L1375.2 807.9L1372.7 803.0L1361.6 804.2L1355.4 820.3L1360.3 821.6L1352.9 827.8L1351.7 835.2L1356.6 838.9L1370.2 841.4L1372.7 847.6L1357.9 853.8L1344.2 861.2M1158.7 513.6L1166.7 514.9L1169.3 528.1L1161.4 526.8L1158.7 513.6M1182.5 528.1L1191.8 528.1L1187.8 537.4L1182.5 528.1M1203.7 532.1L1210.3 526.8L1207.7 536.1M1129.6 571.8L1140.2 569.2L1144.2 575.8L1156.1 574.4L1142.9 579.7L1129.6 571.8M1248.7 574.4L1256.6 577.1L1255.3 586.3L1250.0 585.0M0.1 2.2L5.3 12.5L3.2 29.1L0.1 31.1M940.0 0.0L938.0 22.0L925.0 32.0M1189.0 0.0L1196.0 16.0L1184.0 32.0M1.0 1223.0L6.0 1220.5L31.0 1217.0M6.0 1223.0L1.0 1238.0L8.6 1258.0L1.0 1260.7M0.0 1260.7L16.0 1263.0L26.0 1278.0L23.7 1303.5L31.0 1316.0L21.0 1331.0L28.7 1346.0L18.6 1364.0L26.0 1379.0L21.0 1394.0L1.0 1396.6M31.0 1424.0L21.0 1429.0L23.7 1444.0L13.6 1462.0L18.6 1469.5L11.0 1480.0M1040.6 921.3L1036.6 931.3L1039.6 938.9L1029.6 937.4L1028.0 943.9L1020.5 945.4L1021.5 954.0L1014.5 961.5L1020.5 966.5L1015.5 974.0L1023.0 986.7L1034.6 984.0L1023.0 994.0L1020.5 1001.8L1014.5 999.0L1008.0 1011.8L1003.0 1009.0L997.9 1024.4L992.0 1027.0M1023.0 994.0L1028.0 1006.8L1030.6 1016.9L1040.6 1019.4M992.0 1271.0L1003.0 1266.0L1018.0 1268.4L1030.6 1261.0L1040.6 1260.0M245.0 1450.0L232.5 1465.0L237.5 1480.0M680.0 1450.0L675.0 1457.5L679.0 1460.0L675.0 1475.0L667.5 1480.0M0.0 746.2L10.0 756.2L18.8 760.0L20.0 766.2L26.2 766.2L25.0 773.0L33.2 773.0M110.8 803.8L125.0 817.0L132.0 812.5L133.8 796.2L145.0 796.2L149.5 792.5L160.0 802.5L161.2 813.8L172.5 811.2L180.0 814.5L187.0 805.5L200.0 811.2L202.0 805.0L210.0 800.5L223.8 800.0L226.2 806.2L222.5 812.0L232.5 816.2L235.0 813.0L241.2 811.2L242.5 808.8L247.5 810.0L252.5 804.5L256.2 810.0L245.0 835.0L250.8 851.2L238.8 856.2L240.0 861.2M383.8 856.2L397.5 849.5L397.5 845.0L420.0 850.0L426.2 839.5L428.8 843.8L436.2 844.5L438.0 849.5L450.0 837.5L453.8 833.8L460.0 835.5M265.0 861.2L271.2 858.0L273.8 861.2M322.5 861.2L330.0 860.0L330.5 852.5L333.8 857.5L336.2 855.0L342.5 858.8L348.8 856.2L352.5 852.0L355.0 858.8L350.0 861.2" fill="none" stroke="#a0a1a3" stroke-width="1.7" stroke-linejoin="miter"/>
<path d="M48.7 296.2L53.8 302.3L43.6 322.8L40.0 338.2L66.6 330.5L76.9 345.9L69.2 358.7L82.0 379.2L97.4 397.1L92.2 409.9L102.5 422.7L99.9 440.7L108.6 457.6L100.8 471.0L97.4 484.2M97.4 484.2L76.9 491.9L66.6 512.4L53.8 522.6L38.4 535.5L34.8 562.6L16.7 562.3L0.0 561.1M97.4 484.2L110.2 494.5L123.0 504.7L127.1 496.0L148.6 492.9L158.8 497.0L165.5 513.9L166.5 525.2L179.3 523.7L195.6 515.6L207.5 511.4L225.5 520.1L251.1 525.2L253.6 535.5L244.9 543.1L240.8 566.2L256.2 579.0L271.6 563.6L297.2 558.5L307.4 545.7L327.9 550.8L348.4 545.7L358.7 553.4L374.0 556.0L381.7 571.3L392.0 573.9L397.1 594.4L407.4 589.3L409.9 602.1L427.9 596.9M427.9 596.9L429.4 620.0L422.7 627.7L425.3 645.6L412.5 661.0L415.0 671.2L423.7 679.7L433.0 694.3L435.5 712.2L430.7 724.4L427.9 739.9M27.0 0.1L19.8 16.7L20.8 34.2L32.2 54.9L27.0 63.1L19.8 73.5L20.8 77.6L15.6 78.6L13.6 93.1L7.4 95.2L5.3 104.5L0.1 103.4M35.3 121.0L27.0 121.6L24.9 130.3L20.4 131.3L27.0 143.7L23.9 149.9L15.6 147.9L8.0 154.1L10.5 171.6L0.5 177.8L3.2 190.2L6.3 187.1L12.5 190.2L28.0 186.1L22.9 211.9L40.4 218.7L42.5 223.3L53.9 229.5L54.9 234.6L59.0 233.6L65.2 239.8L59.9 255.1L58.0 272.9L51.4 276.0L50.8 283.2L47.7 283.6L52.8 286.3L48.7 296.0M22.5 1427.5L20.0 1445.0L15.0 1452.5L19.0 1467.5L7.5 1475.0M360.0 1450.0L370.0 1455.0L372.5 1462.5L382.5 1457.5L390.0 1450.0M372.5 1462.5L385.0 1467.5L380.0 1480.0M820.0 1450.0L815.0 1461.0L825.0 1466.0L832.5 1460.0L848.2 1462.8L860.0 1467.5L865.0 1465.0L872.5 1477.5L895.0 1480.0M890.0 1477.5L905.0 1467.5L912.5 1472.5L915.0 1468.5L925.0 1470.0L922.5 1480.0M1160.0 1450.0L1159.0 1462.5L1152.5 1464.0L1155.0 1467.5L1142.5 1477.5L1125.0 1480.0M425.0 720.0L430.0 725.0L428.8 731.2L425.0 735.0L412.5 738.8L413.8 748.8L407.5 753.8L404.5 766.2L416.2 771.2L433.8 787.5L433.8 793.8L457.5 796.2L459.5 802.5L454.9 813.4L445.0 827.5L462.5 835.0L465.0 845.0L473.8 861.2" fill="none" stroke="#b2b3b5" stroke-width="2.6" stroke-linejoin="miter"/>
</svg>
<svg style="left:0;top:0" width="2480" height="1480" viewBox="0 0 2480 1480"><g fill="#7d8087" stroke="#1e212b" stroke-width="1.6"><circle cx="1014.6" cy="335.0" r="4.2"/><circle cx="379.2" cy="445.8" r="4.2"/><circle cx="340.7" cy="686.6" r="4.2"/><circle cx="1165.7" cy="518.5" r="4.2"/><circle cx="1484.4" cy="166.5" r="4.2"/><circle cx="1612.0" cy="304.9" r="4.2"/><circle cx="1544.9" cy="490.9" r="4.2"/><circle cx="1970.2" cy="448.9" r="4.2"/><circle cx="1738.0" cy="607.7" r="4.2"/><circle cx="1948.1" cy="643.6" r="4.2"/><circle cx="2428.8" cy="382.8" r="4.2"/><circle cx="2351.9" cy="490.4" r="4.2"/><circle cx="1350.7" cy="707.1" r="4.2"/><circle cx="558.5" cy="770.7" r="4.2"/><circle cx="366.9" cy="826.1" r="4.2"/><circle cx="1054.5" cy="827.1" r="4.2"/><circle cx="24.6" cy="1168.9" r="4.2"/><circle cx="1033.0" cy="1133.5" r="4.2"/><circle cx="1466.0" cy="802.0" r="4.2"/><circle cx="2108.5" cy="891.7" r="4.2"/><circle cx="2088.5" cy="1090.0" r="4.2"/><circle cx="1667.9" cy="1180.7" r="4.2"/><circle cx="1943.5" cy="1271.9" r="4.2"/><circle cx="2420.0" cy="1319.0" r="4.2"/><circle cx="1867.7" cy="1407.1" r="4.2"/><circle cx="1742.2" cy="1442.0" r="4.2"/></g><circle cx="27.2" cy="948.9" r="6.5" fill="#282d3c" stroke="#7d8087" stroke-width="2"/><circle cx="27.2" cy="948.9" r="2.8" fill="#7d8087"/></svg>
<span class="t ml" id="l0" style="left:983.8px;top:315.5px;font-size:25px;color:#767981">Тверь</span>
<span class="t ml" id="l1" style="left:310.0px;top:426.8px;font-size:25px;color:#767981">Великие Луки</span>
<span class="t ml" id="l2" style="left:297.2px;top:666.5px;font-size:25px;color:#767981">Витебск</span>
<span class="t ml" id="l3" style="left:1106.8px;top:500.1px;font-size:25px;color:#767981">Зеленоград</span>
<span class="t ml" id="l4" style="left:1427.0px;top:148.1px;font-size:25px;color:#767981">Ярославль</span>
<span class="t ml" id="l5" style="left:1322.0px;top:54.3px;font-size:25px;color:#767981">Рыбинск</span>
<span class="t ml" id="l6" style="left:1565.4px;top:284.9px;font-size:25px;color:#767981">Иваново</span>
<span class="t ml" id="l7" style="left:1489.5px;top:470.9px;font-size:25px;color:#767981">Владимир</span>
<span class="t ml" id="l8" style="left:1921.5px;top:396.5px;font-size:25px;color:#767981">Нижний</span>
<span class="t ml" id="l9" style="left:1913.8px;top:427.3px;font-size:25px;color:#767981">Новгород</span>
<span class="t ml" id="l10" style="left:1705.3px;top:589.8px;font-size:25px;color:#767981">Муром</span>
<span class="t ml" id="l11" style="left:1905.1px;top:625.6px;font-size:25px;color:#767981">Арзамас</span>
<span class="t ml" id="l12" style="left:2359.6px;top:363.3px;font-size:25px;color:#767981">Йошкар-Ола</span>
<span class="t ml" id="l13" style="left:2292.0px;top:470.9px;font-size:25px;color:#767981">Чебоксары</span>
<span class="t ml" id="l14" style="-webkit-text-stroke:.5px #868991;left:1227.0px;top:552.1px;font-size:27px;color:#868991">Москва</span>
<span class="t ml" id="l15" style="left:1309.2px;top:688.7px;font-size:25px;color:#767981">Коломна</span>
<span class="t ml" id="l16" style="left:506.3px;top:751.8px;font-size:25px;color:#767981">Смоленск</span>
<span class="t ml" id="l17" style="left:339.2px;top:808.1px;font-size:25px;color:#767981">Орша</span>
<span class="t ml" id="l18" style="left:1020.7px;top:807.1px;font-size:25px;color:#767981">Калуга</span>
<span class="t ml" id="l19" style="left:-1.0px;top:926.0px;font-size:25px;color:#767981">Минск</span>
<span class="t ml" id="l20" style="left:14.0px;top:1021.3px;font-size:32px;color:#767981">Беларусь</span>
<span class="t ml" id="l21" style="left:-70.0px;top:1152.0px;font-size:25px;color:#767981">Солигорск</span>
<span class="t ml" id="l22" style="left:1006.9px;top:1114.5px;font-size:25px;color:#767981">Орёл</span>
<span class="t ml" id="l23" style="left:1017.0px;top:1352.8px;font-size:25px;color:#767981">Курск</span>
<span class="t ml" id="l24" style="left:1428.0px;top:783.0px;font-size:25px;color:#767981">Рязань</span>
<span class="t ml" id="l25" style="left:2063.4px;top:872.7px;font-size:25px;color:#767981">Саранск</span>
<span class="t ml" id="l26" style="left:2432.9px;top:845.5px;font-size:25px;color:#767981">Ульяновск</span>
<span class="t ml" id="l27" style="left:2056.8px;top:1070.0px;font-size:25px;color:#767981">Пенза</span>
<span class="t ml" id="l28" style="left:1627.0px;top:1161.7px;font-size:25px;color:#767981">Тамбов</span>
<span class="t ml" id="l29" style="left:1904.0px;top:1255.5px;font-size:20px;color:#767981">Ртищево</span>
<span class="t ml" id="l30" style="left:2372.4px;top:1300.0px;font-size:25px;color:#767981">Балаково</span>
<span class="t ml" id="l31" style="left:1823.1px;top:1389.2px;font-size:25px;color:#767981">Балашов</span>
<span class="t ml" id="l32" style="left:1679.6px;top:1426.1px;font-size:20px;color:#767981">Борисоглебск</span>
<span class="t ml" id="l33" style="left:2164.9px;top:1392.3px;font-size:25px;color:#767981">Саратов</span>
<span class="t ml" id="l34" style="left:2451.8px;top:1078.7px;font-size:25px;color:#767981">Сызрань</span>
</div>
<div id="sideline"></div>
<!-- title bar -->
<span class="t" id="t_title" style="left:948px;top:38px;font-size:26px;color:#fff">Soilbox - интеллектуальная система сбора, хранения и обработки полевых данных</span>
<!-- pin -->
<svg style="left:2584px;top:18px" width="28" height="40" viewBox="2584 18 28 40"><path d="M2598 23.400c-5.600 0-10.100 4.500-10.100 10.100 0 6.600 7.300 14.600 10.100 18.400 2.800-3.800 10.100-11.800 10.100-18.400 0-5.600-4.500-10.100-10.100-10.100z" fill="none" stroke="#fff" stroke-width="3.800" stroke-linejoin="round"/><circle cx="2598" cy="33.400" r="4.200" fill="#fff"/></svg>
<!-- translate -->
<svg style="left:2667px;top:23px" width="30" height="30" viewBox="2667 23 30 30"><path d="M2671 24.500h7.500l2.800 5.500 3 15.500h-13.300a2.300 2.300 0 0 1-2.300-2.300v-16.400a2.300 2.300 0 0 1 2.300-2.300z" fill="#fff"/><path d="M2681.500 30.300h11.200a1.900 1.900 0 0 1 1.900 1.900v16.300a1.900 1.900 0 0 1-1.900 1.900h-10.400l-1.800-4.900" fill="none" stroke="#fff" stroke-width="1.500"/><path d="M2680.600 45.600l3.800 4.700" stroke="#fff" stroke-width="1.500"/><text x="2670.400" y="40.600" font-family="Liberation Sans, sans-serif" font-size="11.500" font-weight="700" fill="#1f222a">G</text><path d="M2683.700 35.300h8.200M2687.800 33.800v1.500M2690.300 35.300c-.8 3.400-3 6.200-6 8.400M2685.500 37.500c1 2.400 2.900 4.300 5.600 6" fill="none" stroke="#fff" stroke-width="1.500"/></svg>
<!-- download -->
<svg style="left:2744px;top:20px" width="36" height="36" viewBox="2744 20 36 36"><path d="M2762 21.900V43M2753.400 34.600l8.600 8.600 8.600-8.600" fill="none" stroke="#fff" stroke-width="4.600" stroke-linejoin="miter"/><path d="M2748.200 43.700v5.300a2.600 2.600 0 0 0 2.600 2.600h22.400a2.600 2.600 0 0 0 2.600-2.600v-5.300" fill="none" stroke="#fff" stroke-width="4.800"/></svg>
<!-- dots -->
<svg style="left:2836px;top:20px" width="12" height="36" viewBox="2836 20 12 36"><circle cx="2842" cy="28" r="3.200" fill="#fff"/><circle cx="2842" cy="38.100" r="3.200" fill="#fff"/><circle cx="2842" cy="48" r="3.200" fill="#fff"/></svg>

<!-- logo -->
<svg style="left:32px;top:100px" width="48" height="48" viewBox="0 0 48 48"><defs><linearGradient id="lg" x1="0.15" y1="0.10" x2="0.85" y2="0.92"><stop offset="0" stop-color="#72bd7a"/><stop offset="0.5" stop-color="#56a6b4"/><stop offset="1" stop-color="#4488ea"/></linearGradient></defs><circle cx="24" cy="24" r="24" fill="url(#lg)"/><path d="M24.00 6.00L22.10 6.26L20.25 6.72L18.48 7.38L16.81 8.21L15.26 9.22L13.88 10.43L12.65 11.76L11.59 13.19L10.70 14.71L9.99 16.30L9.47 17.93L9.13 19.58L8.97 21.23L9.00 22.87L9.20 24.47L9.57 26.01L10.10 27.48L10.77 28.86L11.57 30.14L12.50 31.30L13.53 32.34L14.64 33.24L15.83 34.00L17.07 34.62L18.35 35.09L19.65 35.40L20.95 35.57L22.24 35.60L23.49 35.49L24.71 35.24L25.86 34.87L26.94 34.38L27.95 33.79L28.86 33.10L29.67 32.34L30.37 31.50L30.96 30.62L31.44 29.70L31.80 28.75L32.01 27.77L32.09 26.80L32.05 25.85L31.90 24.95L31.66 24.10L31.33 23.31L30.92 22.59L30.44 21.95L29.91 21.40L29.34 20.93L28.74 20.55L28.13 20.27L27.51 20.07L26.89 19.96L26.30 19.94L25.73 19.99L25.21 20.11L24.73 20.30L24.30 20.54L23.94 20.83L23.64 21.15L23.73 21.85L23.96 21.65L24.22 21.49L24.52 21.36L24.85 21.26L25.21 21.21L25.58 21.20L25.97 21.25L26.37 21.34L26.77 21.50L27.16 21.70L27.54 21.97L27.89 22.29L28.22 22.66L28.51 23.08L28.75 23.55L28.95 24.06L29.08 24.61L29.16 25.19L29.17 25.79L29.10 26.40L28.98 27.03L28.82 27.69L28.57 28.35L28.23 28.99L27.81 29.61L27.30 30.19L26.71 30.73L26.04 31.20L25.30 31.61L24.50 31.95L23.64 32.19L22.73 32.34L21.79 32.38L20.83 32.32L19.85 32.15L18.88 31.86L17.92 31.45L16.99 30.92L16.11 30.28L15.28 29.53L14.53 28.68L13.86 27.72L13.30 26.68L12.84 25.55L12.50 24.36L12.29 23.12L12.22 21.83L12.29 20.52L12.51 19.20L12.88 17.89L13.40 16.60L14.07 15.36L14.89 14.18L15.85 13.07L16.94 12.06L18.13 11.12L19.44 10.27L20.87 9.56L22.39 9.00L24.00 8.60zM24.00 42.00L25.90 41.74L27.75 41.28L29.52 40.62L31.19 39.79L32.74 38.78L34.12 37.57L35.35 36.24L36.41 34.81L37.30 33.29L38.01 31.70L38.53 30.07L38.87 28.42L39.03 26.77L39.00 25.13L38.80 23.53L38.43 21.99L37.90 20.52L37.23 19.14L36.43 17.86L35.50 16.70L34.47 15.66L33.36 14.76L32.17 14.00L30.93 13.38L29.65 12.91L28.35 12.60L27.05 12.43L25.76 12.40L24.51 12.51L23.29 12.76L22.14 13.13L21.06 13.62L20.05 14.21L19.14 14.90L18.33 15.66L17.63 16.50L17.04 17.38L16.56 18.30L16.20 19.25L15.99 20.23L15.91 21.20L15.95 22.15L16.10 23.05L16.34 23.90L16.67 24.69L17.08 25.41L17.56 26.05L18.09 26.60L18.66 27.07L19.26 27.45L19.87 27.73L20.49 27.93L21.11 28.04L21.70 28.06L22.27 28.01L22.79 27.89L23.27 27.70L23.70 27.46L24.06 27.17L24.36 26.85L24.27 26.15L24.04 26.35L23.78 26.51L23.48 26.64L23.15 26.74L22.79 26.79L22.42 26.80L22.03 26.75L21.63 26.66L21.23 26.50L20.84 26.30L20.46 26.03L20.11 25.71L19.78 25.34L19.49 24.92L19.25 24.45L19.05 23.94L18.92 23.39L18.84 22.81L18.83 22.21L18.90 21.60L19.02 20.97L19.18 20.31L19.43 19.65L19.77 19.01L20.19 18.39L20.70 17.81L21.29 17.27L21.96 16.80L22.70 16.39L23.50 16.05L24.36 15.81L25.27 15.66L26.21 15.62L27.17 15.68L28.15 15.85L29.12 16.14L30.08 16.55L31.01 17.08L31.89 17.72L32.72 18.47L33.47 19.32L34.14 20.28L34.70 21.32L35.16 22.45L35.50 23.64L35.71 24.88L35.78 26.17L35.71 27.48L35.49 28.80L35.12 30.11L34.60 31.40L33.93 32.64L33.11 33.82L32.15 34.93L31.06 35.94L29.87 36.88L28.56 37.73L27.13 38.44L25.61 39.00L24.00 39.40z" fill="#fff"/></svg>
<span class="t b" id="t_soil" style="transform:translateY(-50%) scaleX(.860);transform-origin:0 50%;left:89.500px;top:122.200px;font-size:46px;color:#fff">soil</span>
<span class="t" id="t_box" style="left:161.500px;top:122.200px;font-size:46px;color:#fff">box</span>
<!-- home -->
<svg style="left:330px;top:107px" width="36" height="33" viewBox="330 107 36 33"><path d="M346.500 109.800a1.800 1.800 0 0 1 2.400 0L363.600 123a1.600 1.600 0 0 1-1.100 2.800H360.900V136.100a2 2 0 0 1-2 2H351V132a3.100 3.100 0 0 0-6.200 0v6.100H336.900a2 2 0 0 1-2-2V125.800H333a1.600 1.600 0 0 1-1.100-2.800z" fill="#f7f7f7"/></svg>
<span class="t" id="t_home" style="left:382.200px;top:125.600px;font-size:32px;color:#fff">Главная</span>
<!-- db -->
<svg style="left:571.0px;top:107.4px" width="28.00" height="32.0" viewBox="0 0 448 512"><path d="M448 73.143v45.714C448 159.143 347.667 192 224 192S0 159.143 0 118.857V73.143C0 32.857 100.333 0 224 0s224 32.857 224 73.143zM448 176v102.857C448 319.143 347.667 352 224 352S0 319.143 0 278.857V176c48.125 33.143 136.208 48.572 224 48.572S399.874 209.143 448 176zm0 160v102.857C448 479.143 347.667 512 224 512S0 479.143 0 438.857V336c48.125 33.143 136.208 48.572 224 48.572S399.874 369.143 448 336z" fill="#4a90e8"/></svg>
<span class="t" id="t_proj" style="left:618.600px;top:125.600px;font-size:32px;color:#4a90e8">Проекты</span>

<!-- users gear -->
<svg style="left:2292px;top:102px" width="56" height="46" viewBox="2292 102 56 46"><g fill="#f7f7f7"><circle cx="2305" cy="111" r="6.300"/><circle cx="2333.800" cy="111" r="6.300"/><path d="M2293.700 129.800c0-5.500 4-9.300 9.300-9.300h4c5.300 0 9.300 3.800 9.300 9.300z"/><path d="M2322.500 129.800c0-5.500 4-9.300 9.300-9.300h4c5.300 0 9.300 3.800 9.300 9.300z"/></g><circle cx="2319" cy="122" r="9.300" fill="#1f222a"/><circle cx="2319" cy="122" r="7.300" fill="#f7f7f7"/><path d="M2301.700 146.800c0-8.500 5.500-14.500 13-14.500h8.600c7.500 0 13 6 13 14.500z" fill="#1f222a"/><path d="M2303.700 144.800c0-6.500 4.500-10.500 11-10.500h8.600c6.500 0 11 4 11 10.500z" fill="#f7f7f7"/><circle cx="2334" cy="134.800" r="11.800" fill="#1f222a"/><path fill="#f7f7f7" fill-rule="evenodd" transform="translate(2324.2 125) scale(0.0383)" d="M487.400 315.700l-42.600-24.600c4.300-23.200 4.300-47 0-70.200l42.600-24.600c4.900-2.800 7.100-8.600 5.500-14-11.100-35.600-30-67.800-54.700-94.600-3.800-4.100-10-5.100-14.800-2.300L380.800 110c-17.900-15.400-38.500-27.300-60.800-35.100V25.800c0-5.600-3.900-10.500-9.400-11.700-36.700-8.200-74.300-7.800-109.200 0-5.500 1.200-9.400 6.100-9.400 11.700V75c-22.200 7.900-42.800 19.800-60.800 35.100L88.700 85.500c-4.900-2.800-11-1.900-14.800 2.300-24.700 26.700-43.600 58.900-54.700 94.600-1.700 5.400.6 11.200 5.500 14L67.300 221c-4.300 23.200-4.300 47 0 70.200l-42.600 24.600c-4.900 2.800-7.100 8.600-5.500 14 11.100 35.600 30 67.800 54.700 94.600 3.800 4.100 10 5.100 14.800 2.300l42.600-24.600c17.900 15.400 38.500 27.300 60.800 35.100v49.200c0 5.600 3.900 10.500 9.400 11.700 36.700 8.200 74.300 7.800 109.200 0 5.500-1.200 9.400-6.100 9.400-11.700v-49.200c22.200-7.900 42.800-19.800 60.800-35.100l42.600 24.600c4.900 2.800 11 1.900 14.800-2.300 24.700-26.700 43.600-58.900 54.700-94.600 1.500-5.500-.7-11.300-5.600-14.100zM256 336c-44.100 0-80-35.900-80-80s35.900-80 80-80 80 35.900 80 80-35.900 80-80 80z"/></svg>
<!-- book -->
<svg style="left:2390px;top:105px" width="50" height="40" viewBox="2390 105 50 40"><path d="M2394.800 107.300h14.200c2 0 3.500 1.500 3.500 3.500v30.700c-4.500-2.600-13-3.300-20.500.1v-31.500c0-1.600 1.200-2.800 2.800-2.800zM2434.100 107.300h-14.200c-2 0-3.500 1.500-3.500 3.500v30.700c4.500-2.600 13-3.300 20.500.1v-31.500c0-1.600-1.200-2.800-2.800-2.800z" fill="#f7f7f7"/></svg>
<span class="t" id="t_user" style="left:2534px;top:125px;font-size:32px;color:#fff">tagir_galimov</span>
<!-- user -->
<svg style="left:2747.8px;top:103.75px" width="35.09" height="40.1" viewBox="0 0 448 512"><path d="M224 256A128 128 0 1 0 224 0a128 128 0 1 0 0 256zm-45.7 48C79.8 304 0 383.8 0 482.3C0 498.7 13.3 512 29.7 512H418.3c16.400 0 29.700-13.300 29.700-29.700C448 383.800 368.200 304 269.700 304H178.300z" fill="#f7f7f7"/></svg>
<svg style="left:2798.5px;top:120px" width="18.5" height="11.5" viewBox="0 0 20 12"><path d="M1.500 0h17c1.200 0 1.800 1.400 1 2.300l-8.500 9c-.5.600-1.500.6-2 0l-8.500-9C-.3 1.400.3 0 1.500 0z" fill="#fff"/></svg>

<!-- sub header -->
<svg style="left:57px;top:228px" width="24" height="36" viewBox="57 228 24 36"><path d="M77.500 231L62.500 246l15 15" fill="none" stroke="#f7f7f7" stroke-width="4.400" stroke-linecap="round" stroke-linejoin="round"/></svg>
<span class="t b" id="t_zhd" style="left:127.6px;top:247px;font-size:40px;color:#fff">Жд</span>
<div class="btn" style="left:2207px;top:206px;width:305px;height:80px;border-radius:16px"></div>
<span class="t" id="t_imp" style="left:2242.2px;top:246.3px;font-size:28px;color:#fff">Импорт из файла</span>
<div class="abs" style="left:2544px;top:206px;width:288px;height:80px;border-radius:14px;background:#4a90e8"></div>
<span class="t" id="t_exp" style="left:2578.4px;top:246.3px;font-size:28px;color:#fff">Экспорт данных</span>
<!-- sidebar -->
<svg style="left:59.0px;top:391.0px" width="50.00" height="50.0" viewBox="0 0 512 512"><path d="M256 8C119.043 8 8 119.083 8 256c0 136.997 111.043 248 248 248s248-111.003 248-248C504 119.083 392.957 8 256 8zm0 110c23.196 0 42 18.804 42 42s-18.804 42-42 42-42-18.804-42-42 18.804-42 42-42zm56 254c0 6.627-5.373 12-12 12h-88c-6.627 0-12-5.373-12-12v-24c0-6.627 5.373-12 12-12h12v-64h-12c-6.627 0-12-5.373-12-12v-24c0-6.627 5.373-12 12-12h64c6.627 0 12 5.373 12 12v100h12c6.627 0 12 5.373 12 12v24z" fill="#f7f7f7"/></svg>
<span class="t" id="t_s1" style="left:152px;top:417.5px;font-size:28px;color:#fff">Общее</span>
<svg style="left:62.8px;top:503.75px" width="42.18" height="48.2" viewBox="0 0 448 512"><path d="M448 73.143v45.714C448 159.143 347.667 192 224 192S0 159.143 0 118.857V73.143C0 32.857 100.333 0 224 0s224 32.857 224 73.143zM448 176v102.857C448 319.143 347.667 352 224 352S0 319.143 0 278.857V176c48.125 33.143 136.208 48.572 224 48.572S399.874 209.143 448 176zm0 160v102.857C448 479.143 347.667 512 224 512S0 479.143 0 438.857V336c48.125 33.143 136.208 48.572 224 48.572S399.874 369.143 448 336z" fill="#f7f7f7"/></svg>
<span class="t" id="t_s2" style="left:152px;top:529.5px;font-size:28px;color:#fff">Данные</span>
<svg style="left:59.75px;top:615.7px" width="48.40" height="48.4" viewBox="0 0 512 512"><path d="M464 32H48C21.49 32 0 53.49 0 80v352c0 26.51 21.49 48 48 48h416c26.51 0 48-21.49 48-48V80c0-26.51-21.49-48-48-48zM224 416H64v-96h160v96zm0-160H64v-96h160v96zm224 160H288v-96h160v96zm0-160H288v-96h160v96z" fill="#f7f7f7"/></svg>
<span class="t" id="t_s3" style="left:152px;top:641px;font-size:28px;color:#fff">Таблицы</span>
<svg style="left:59.75px;top:727.75px" width="51.27" height="48.25" viewBox="0 0 544 512"><path d="M527.79 288H290.5l158.03 158.03c6.04 6.04 15.98 6.53 22.19.68 38.7-36.46 65.32-85.61 73.13-140.86 1.34-9.46-6.51-17.85-16.06-17.85zm-15.83-64.8C503.72 103.74 408.26 8.28 288.8.04 279.68-.59 272 7.1 272 16.24V240h223.77c9.14 0 16.82-7.68 16.19-16.8zM224 288V50.71c0-9.55-8.39-17.4-17.84-16.06C86.99 51.49-4.1 155.6.14 280.37 4.5 408.51 114.83 513.59 243.03 511.98c50.4-.63 96.97-16.87 135.26-44.03 7.9-5.6 8.42-17.23 1.57-24.08L224 288z" fill="#4a90e8"/></svg>
<span class="t" id="t_s4" style="left:152px;top:753px;font-size:28px;color:#4a90e8">Доска</span>
<div class="abs" style="left:274px;top:1676px;width:76px;height:76px;border-radius:16px;background:#3b4152"></div>
<svg style="left:299px;top:1702px" width="26" height="24" viewBox="0 0 26 24"><path d="M11.500 2.500L2.500 12l9 9.500M23.500 2.500L14.500 12l9 9.500" fill="none" stroke="#fff" stroke-width="3.600" stroke-linecap="round" stroke-linejoin="round"/></svg>
<!-- top info panel -->
<div class="panel" style="left:432px;top:352px;width:1342px;height:96px;border-radius:18px"></div>
<div class="abs" style="left:878px;top:354px;width:2px;height:92px;background:#384053"></div>
<div class="abs" style="left:1324px;top:354px;width:2px;height:92px;background:#384053"></div>
<span class="t b" id="t_date" style="left:532.5px;top:401.3px;font-size:28px;color:#fff">02.04.24 - 30.04.24</span>
<span class="t b" id="t_stat" style="left:983px;top:401.3px;font-size:28px;color:#fff">Статус: <span style="color:#4a90e8">В работе</span></span>
<span class="t" id="t_skv" style="left:1401.25px;top:382.6px;font-size:24px;color:#fff"><b>1 / 6</b> скв.</span>
<span class="t" id="t_pm" style="left:1358px;top:418.4px;font-size:24px;color:#fff"><b>70 / 175</b> п.м.</span>
<div class="abs" style="left:1532px;top:367px;width:208px;height:65px;border-radius:16px;background:#1f222a;border:2px solid #3a4152;overflow:hidden"><div style="position:absolute;left:0;top:0;width:80px;height:100%;background:#4a90e8"></div></div>
<span class="t b" id="t_40" style="left:1612px;top:402px;font-size:24px;color:#fff">40%</span>
<!-- report button -->
<div class="btn" style="left:1822px;top:352px;width:338px;height:96px;border-radius:18px"></div>
<svg style="left:1855px;top:387px" width="30" height="27" viewBox="1855 387 30 27"><path d="M1857.500 389.500v17.500a3.500 3.500 0 0 0 3.500 3.500h21.500" fill="none" stroke="#f7f7f7" stroke-width="3.400" stroke-linecap="round"/><path d="M1865 404.200v-3.400M1870.200 404.200V395.300M1875.500 404.200v-6M1880.700 404.200V391.600" fill="none" stroke="#f7f7f7" stroke-width="2.800" stroke-linecap="round"/></svg>
<span class="t" id="t_rep" style="left:1900.4px;top:400.8px;font-size:28px;color:#fff">Выгрузить отчет</span>
<!-- gear / layers -->
<div class="btn" style="left:2656px;top:352px;width:80px;height:80px;border-radius:18px"></div>
<svg style="left:2673.0px;top:369.1px" width="45.80" height="45.8" viewBox="0 0 512 512"><path d="M487.4 315.7l-42.6-24.6c4.3-23.2 4.3-47 0-70.200l42.6-24.600c4.900-2.800 7.100-8.600 5.500-14-11.100-35.600-30-67.800-54.700-94.600-3.800-4.100-10-5.100-14.800-2.300L380.800 110c-17.900-15.400-38.500-27.300-60.800-35.100V25.800c0-5.600-3.900-10.500-9.400-11.700-36.700-8.200-74.300-7.800-109.200 0-5.500 1.200-9.400 6.100-9.400 11.700V75c-22.200 7.900-42.800 19.800-60.800 35.100L88.700 85.500c-4.900-2.800-11-1.900-14.800 2.300-24.700 26.700-43.600 58.900-54.700 94.600-1.700 5.400.6 11.200 5.500 14L67.300 221c-4.300 23.200-4.300 47 0 70.200l-42.600 24.600c-4.900 2.800-7.100 8.600-5.500 14 11.100 35.600 30 67.800 54.700 94.600 3.800 4.100 10 5.100 14.800 2.300l42.600-24.600c17.900 15.400 38.500 27.300 60.800 35.100v49.200c0 5.600 3.900 10.500 9.400 11.700 36.700 8.200 74.300 7.800 109.200 0 5.500-1.200 9.400-6.100 9.400-11.700v-49.200c22.200-7.900 42.800-19.800 60.800-35.100l42.600 24.600c4.900 2.800 11 1.900 14.800-2.300 24.700-26.700 43.600-58.900 54.700-94.600 1.500-5.500-.7-11.300-5.600-14.100zM256 336c-44.100 0-80-35.900-80-80s35.900-80 80-80 80 35.900 80 80-35.900 80-80 80z" fill="#f7f7f7"/></svg>
<div class="btn" style="left:2768px;top:352px;width:80px;height:80px;border-radius:18px"></div>
<svg style="left:2788px;top:372px" width="40" height="40" viewBox="0 0 40 40"><g fill="#fff"><path d="M18.300.600c1.100-.5 2.300-.5 3.400 0l16.600 7.700c.6.300 1.100.9 1.100 1.700s-.4 1.400-1.100 1.700l-16.600 7.700c-1.100.5-2.300.5-3.400 0L1.700 11.700C1 11.400.6 10.700.6 10s.4-1.400 1.100-1.700z"/><path d="M34.200 16.200l4.100 1.900c.6.300 1.100.9 1.100 1.700s-.4 1.400-1.100 1.700l-16.600 7.700c-1.100.5-2.300.5-3.400 0L1.700 21.500C1 21.200.6 20.500.6 19.800s.4-1.400 1.100-1.700l4.100-1.900 11.400 5.300c1.800.8 3.800.8 5.600 0z"/><path d="M34.200 26l4.100 1.900c.6.300 1.100.9 1.100 1.700s-.4 1.400-1.100 1.700l-16.600 7.700c-1.100.5-2.300.5-3.400 0L1.700 31.300C1 31 .6 30.300.6 29.600s.4-1.400 1.100-1.700L5.800 26l11.400 5.300c1.800.8 3.800.8 5.600 0z"/></g></svg>
<!-- right controls -->
<div class="btn" style="left:2768px;top:869px;width:80px;height:80px;border-radius:18px"></div>
<svg style="left:2793px;top:894px" width="30" height="30" viewBox="0 0 30 30"><path d="M2 10V4a2 2 0 0 1 2-2h6M20 2h6a2 2 0 0 1 2 2v6M28 20v6a2 2 0 0 1-2 2h-6M10 28H4a2 2 0 0 1-2-2v-6" fill="none" stroke="#fff" stroke-width="3.800" stroke-linecap="round"/></svg>
<div class="btn" style="left:2768px;top:981px;width:80px;height:160px;border-radius:18px"></div>
<div class="abs" style="left:2770px;top:1059px;width:76px;height:2px;background:#20232b"></div>
<svg style="left:2793px;top:1006px" width="30" height="30" viewBox="0 0 30 30"><path d="M15 2v26M2 15h26" stroke="#fff" stroke-width="4" stroke-linecap="round"/></svg>
<svg style="left:2793px;top:1084px" width="30" height="30" viewBox="0 0 30 30"><path d="M2 15h26" stroke="#fff" stroke-width="4" stroke-linecap="round"/></svg>
<div class="btn" style="left:2768px;top:1173px;width:80px;height:80px;border-radius:18px"></div>
<svg style="left:2793px;top:1198px" width="30" height="30" viewBox="0 0 30 30"><path d="M27.500 1.200L1.800 11.600c-1.300.5-.9 2.400.5 2.400H14a1 1 0 0 1 1 1v11.800c0 1.400 1.900 1.800 2.400.5L28.600 2.600c.4-.9-.3-1.700-1.100-1.400z" fill="#fff"/></svg>
<!-- chevron down button -->
<div class="btn" style="left:432px;top:1069px;width:80px;height:80px;border-radius:18px"></div>
<svg style="left:461px;top:1102px" width="22" height="14" viewBox="0 0 22 14"><path d="M2.500 3l8.500 8.500L19.500 3" fill="none" stroke="#fff" stroke-width="3.200" stroke-linecap="round" stroke-linejoin="round"/></svg>
<!-- cluster -->
<svg style="left:1562px;top:856px" width="88" height="88" viewBox="-44 -44 88 88"><circle r="38.800" fill="none" stroke="#f8d98b" stroke-width="9.800"/><circle r="38.800" fill="none" stroke="#5596e4" stroke-width="9.800" stroke-dasharray="97.520 243.790" stroke-dashoffset="-97.520" transform="rotate(-90)"/><circle r="38.800" fill="none" stroke="#6fb583" stroke-width="9.800" stroke-dasharray="48.760 243.790" stroke-dashoffset="-195.030" transform="rotate(-90)"/><circle r="34.300" fill="#22252e"/></svg>
<span class="t b" id="t_5" style="left:1598.4px;top:901.3px;font-size:28px;color:#fff">5</span>
<!-- legend -->
<div class="btn" style="left:2600px;top:1686px;width:248px;height:84px;border-radius:18px"></div>
<span class="t b" id="t_leg" style="left:2633px;top:1730px;font-size:28px;color:#fff">Легенда</span>
<svg style="left:2787px;top:1717px" width="26" height="18" viewBox="0 0 26 18"><path d="M2 15L13 4l11 11" fill="none" stroke="#fff" stroke-width="3" stroke-linecap="round" stroke-linejoin="round"/></svg>
<!-- chart panel -->
<div class="panel" style="left:432px;top:1180px;width:960px;height:591px;border-radius:20px"></div>
<span class="t b" id="t_graf" style="left:467px;top:1237.8px;font-size:28px;color:#fff">График выполнения работ</span>
<svg style="left:875.3px;top:1222.5px" width="29.40" height="29.4" viewBox="0 0 512 512"><path d="M256 8C119.043 8 8 119.083 8 256c0 136.997 111.043 248 248 248s248-111.003 248-248C504 119.083 392.957 8 256 8zm0 110c23.196 0 42 18.804 42 42s-18.804 42-42 42-42-18.804-42-42 18.804-42 42-42zm56 254c0 6.627-5.373 12-12 12h-88c-6.627 0-12-5.373-12-12v-24c0-6.627 5.373-12 12-12h12v-64h-12c-6.627 0-12-5.373-12-12v-24c0-6.627 5.373-12 12-12h64c6.627 0 12 5.373 12 12v100h12c6.627 0 12 5.373 12 12v24z" fill="#747a8c"/></svg>
<div class="abs" style="left:466px;top:1291px;width:892px;height:322px;border-radius:18px;background:#3b4152;border:2px solid #20232b"></div>
<svg style="left:467px;top:1292px" width="890" height="320" viewBox="467 1292 890 320">
<path d="M484.0 1311V1592M514.6 1311V1592M545.1 1311V1592M575.7 1311V1592M606.2 1311V1592M636.8 1311V1592M667.3 1311V1592M697.9 1311V1592M728.4 1311V1592M759.0 1311V1592M789.5 1311V1592M820.1 1311V1592M850.6 1311V1592M881.2 1311V1592M911.8 1311V1592M942.3 1311V1592M972.9 1311V1592M1003.4 1311V1592M1034.0 1311V1592M1064.5 1311V1592M1095.1 1311V1592M1125.6 1311V1592M1156.2 1311V1592M1186.7 1311V1592M1217.3 1311V1592M1247.8 1311V1592M1278.4 1311V1592M1308.9 1311V1592M1339.5 1311V1592M484 1311.0H1339.5M484 1367.2H1339.5M484 1423.4H1339.5M484 1479.6H1339.5M484 1535.8H1339.5M484 1592.0H1339.5" fill="none" stroke="#fff" stroke-opacity=".07" stroke-width="2"/>
<path d="M484 1355.500L1339.500 1592H484z" fill="#8cc4f4" fill-opacity=".340"/>
<path d="M484 1355.500L1339.500 1592" fill="none" stroke="#4a90e8" stroke-width="7"/>
<path d="M484 1346.500H790L820.500 1444.500H1095.500V1592H484z" fill="#7fd2a0" fill-opacity=".330"/>
<path d="M484 1346.500H790L820.500 1444.500H1095.500" fill="none" stroke="#6fb583" stroke-width="7"/>
</svg>
<div class="abs" style="left:466px;top:1646px;width:892px;height:90px;border-radius:16px;background:#3f2f37"></div>
<svg style="left:490px;top:1671px" width="40" height="40" viewBox="0 0 40 40"><circle cx="20" cy="20" r="20" fill="#e5554f"/><path d="M20 9v13" stroke="#3f2f37" stroke-width="4.200" stroke-linecap="round"/><circle cx="20" cy="29" r="2.600" fill="#3f2f37"/></svg>
<span class="t" id="t_otst" style="left:547px;top:1692px;font-size:28px;color:#fff">Отставание от графика:</span>
<span class="t b" id="t_5672" style="left:887px;top:1692px;font-size:28px;color:#e5554f">56.72 п.м.</span>
<!-- wells panel -->
<div class="panel" style="left:1440px;top:1180px;width:600px;height:591px;border-radius:20px"></div>
<span class="t b" id="t_skvz" style="left:1475px;top:1236.3px;font-size:28px;color:#fff">Скважины</span>
<div class="abs" style="left:1476px;top:1289px;width:528px;height:44px;border-radius:14px;overflow:hidden;background:#f8d98b"><div style="position:absolute;left:0;top:0;width:90px;height:44px;background:#6fb583"></div><div style="position:absolute;left:90px;top:0;width:174px;height:44px;background:#4a90e8"></div></div>
<span class="t" id="t_17" style="left:1495px;top:1312.2px;font-size:28px;color:#fff">17%</span>
<span class="t" id="t_33" style="left:1625.5px;top:1312.2px;font-size:28px;color:#fff">33%</span>
<span class="t" id="t_50" style="left:1845px;top:1312.2px;font-size:28px;color:#1f222a">50%</span>
<div class="btn" style="left:1474.500px;top:1367.500px;width:531px;height:75px;border-radius:18px;border-color:#22252e"></div>
<div class="btn" style="left:1474.500px;top:1459.500px;width:531px;height:75px;border-radius:18px;border-color:#22252e"></div>
<div class="btn" style="left:1474.500px;top:1551.500px;width:531px;height:75px;border-radius:18px;border-color:#22252e"></div>
<div class="btn" style="left:1474.500px;top:1643.500px;width:531px;height:75px;border-radius:18px;border-color:#22252e"></div>
<span class="t b" id="t_r1" style="left:1508.6px;top:1406.3px;font-size:28px;color:#6fb583">Закрыта</span>
<span class="t b" id="t_r2" style="left:1508.6px;top:1498px;font-size:28px;color:#4a90e8">Бурение</span>
<span class="t b" id="t_r3" style="left:1508.6px;top:1590.3px;font-size:28px;color:#e9a15d">Вынесена</span>
<span class="t b" id="t_r4" style="left:1508.6px;top:1682px;font-size:28px;color:#f8d98b">Не начата</span>
<span class="t b" id="t_n1" style="left:1832.5px;top:1406.3px;font-size:28px;color:#6fb583">1</span>
<span class="t" id="t_v1" style="left:1863.75px;top:1406.3px;font-size:28px;color:#6fb583">(25 п.м.)</span>
<span class="t b" id="t_n2" style="left:1832.5px;top:1498px;font-size:28px;color:#4a90e8">2</span>
<span class="t" id="t_v2" style="left:1863.75px;top:1498px;font-size:28px;color:#4a90e8">(45 п.м.)</span>
<span class="t b" id="t_n3" style="left:1847.5px;top:1590.3px;font-size:28px;color:#e9a15d">0</span>
<span class="t" id="t_v3" style="left:1879.5px;top:1590.3px;font-size:28px;color:#e9a15d">(0 п.м.)</span>
<span class="t b" id="t_n4" style="left:1832.5px;top:1682px;font-size:28px;color:#f8d98b">3</span>
<span class="t" id="t_v4" style="left:1863.75px;top:1682px;font-size:28px;color:#f8d98b">(85 п.м.)</span>

</body>
</html>
